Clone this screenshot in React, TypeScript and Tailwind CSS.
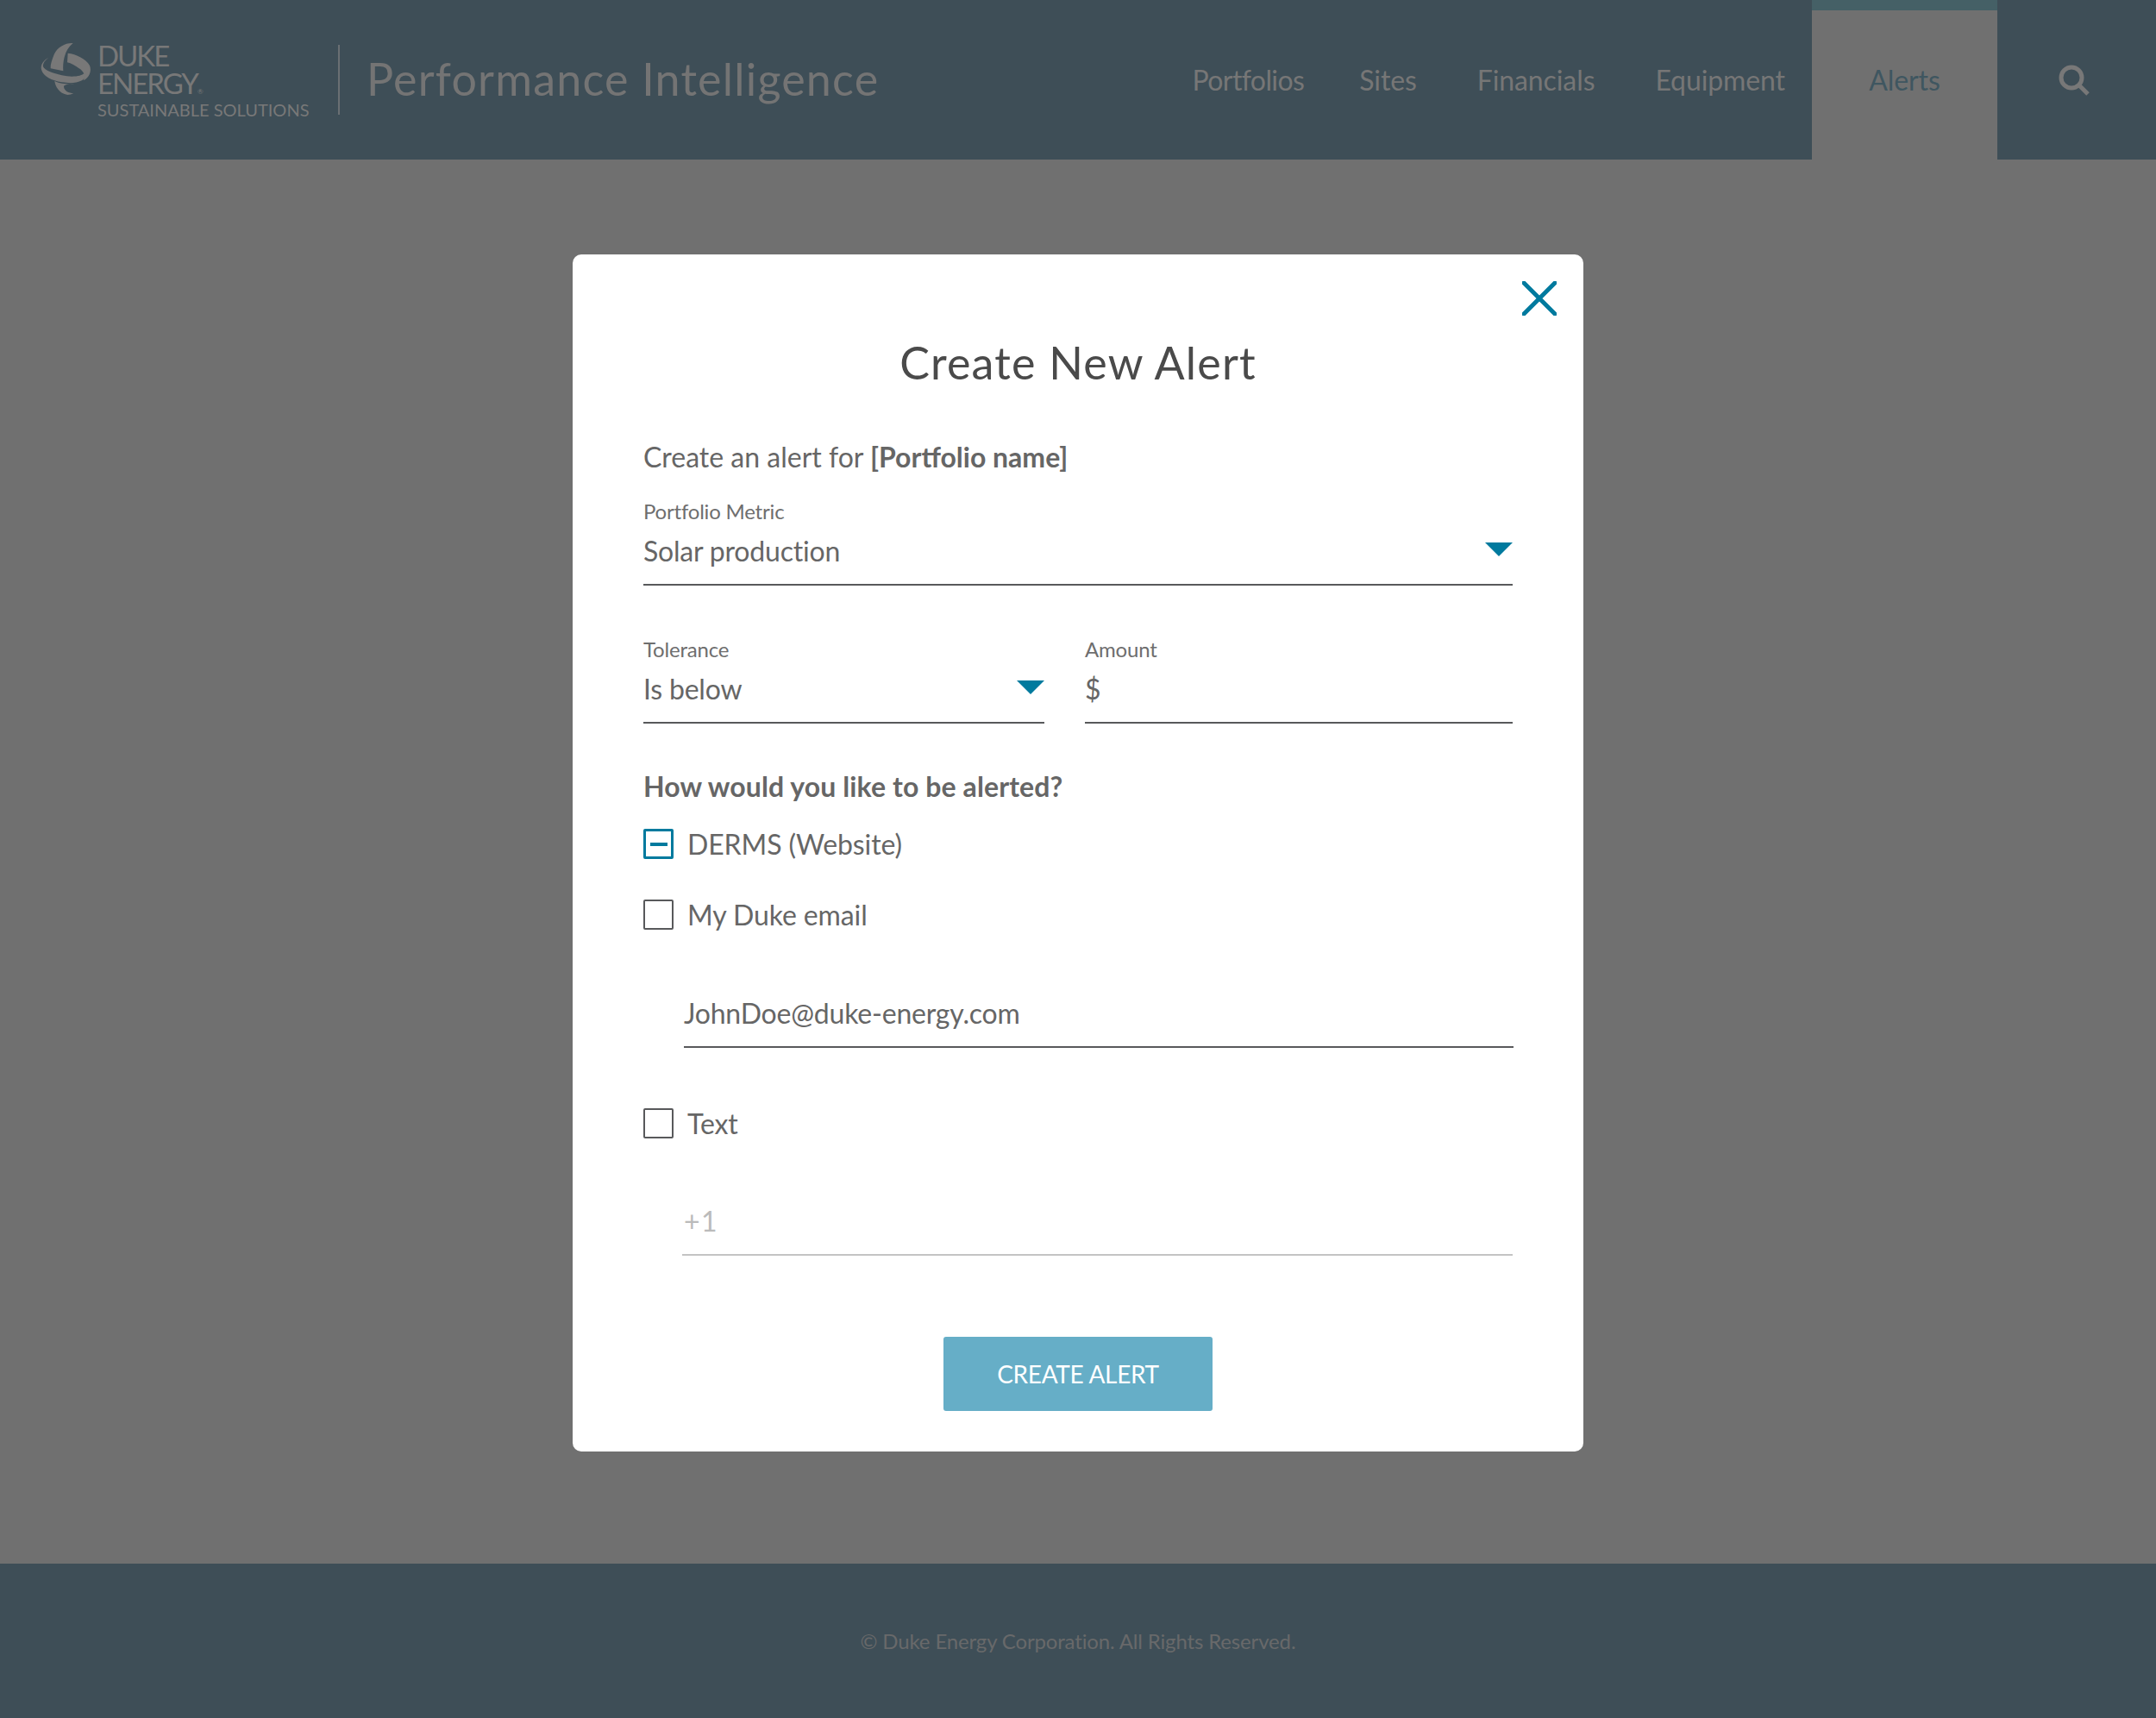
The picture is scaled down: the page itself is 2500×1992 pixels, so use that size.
const font = "font-['Lato',sans-serif]";

const navItems = [
  { label: 'Portfolios', className: 'tracking-[-0.6px]' },
  { label: 'Sites', className: 'ml-[64px]' },
  { label: 'Financials', className: 'ml-[70px]' },
  { label: 'Equipment', className: 'ml-[70px]' },
];

const LogoMark = () => (
  <svg viewBox="0 0 225 225" className="w-[75px] h-[75px] shrink-0" fill="#787878">
    <path d="M134 30C110 28 80 42 68 70c-8 20-13 35-12 48l44 9c-2-27 2-72 34-97z" />
    <path d="M116 65c29 3 64 20 76 43 8 20-2 42-22 52 8-15 2-32-15-42-13-10-27-18-41-21z" />
    <path d="M50 80C30 90 20 105 24 122c6 23 36 38 71 44 25 4 50 4 70-6 13-8 13-18 7-25-7 10-42 15-77 7-30-7-60-17-65-30-2-12 8-24 20-32z" />
    <path d="M70 162c2 18 15 43 45 48 7 0 15-2 21-6-18 0-32-8-34-22 0-6 10-10 38-10-22 2-50 0-70-10z" />
  </svg>
);

const Caret = () => (
  <span className="w-0 h-0 border-l-[16px] border-r-[16px] border-t-[16px] border-l-transparent border-r-transparent border-t-[#007a9e] mt-[-4px]" />
);

const Field = ({ label, value, caret, className }: { label: string; value: string; caret?: boolean; className: string }) => (
  <div className={className}>
    <div className="h-[30px] text-[24px] leading-[30px] tracking-[-0.2px] text-[#6e6e6e]">{label}</div>
    <div className="mt-[11px] h-[40px] flex items-center justify-between text-[32px] leading-[40px] tracking-[-0.2px] text-[#666666]">
      <span>{value}</span>
      {caret && <Caret />}
    </div>
    <div className="mt-[18px] h-[2px] bg-[#58595b]" />
  </div>
);

const Check = ({ label, on }: { label: string; on?: boolean }) => (
  <div className="flex items-center h-[35px] gap-[16px] text-[32px] tracking-[-0.1px] text-[#666666]">
    <span className={`w-[35px] h-[35px] rounded-[2px] flex items-center justify-center ${on ? 'border-[3px] border-[#007a9e]' : 'border-[2px] border-[#58595b]'}`}>
      {on && <span className="w-[20px] h-[4px] bg-[#007a9e]" />}
    </span>
    <span>{label}</span>
  </div>
);

export default function App() {
  return (
    <div className={`${font} w-[2500px] h-[1992px] flex flex-col bg-[#707070]`}>
      <header className="h-[185px] flex bg-[#3e4e57] shrink-0">
        <div className="flex flex-1 pl-[40px]">
          <div className="pt-[40px]"><LogoMark /></div>
          <div className="ml-[-2px] pt-[48px] w-[260px] text-[#787878]">
            <div className="text-[33px] leading-[32px] tracking-[-2px]">
              DUKE
              <br />
              ENERGY<span className="text-[8px] leading-none tracking-normal">®</span>
            </div>
            <div className="text-[20px] leading-[24px] mt-[3px] whitespace-nowrap">SUSTAINABLE SOLUTIONS</div>
          </div>
          <div className="mt-[52px] w-[2px] h-[81px] bg-[#6a6f73] ml-[19px]" />
          <div className="ml-[31px] mt-[59px] text-[52px] leading-[64px] tracking-[1.2px] text-[#747474] whitespace-nowrap">Performance Intelligence</div>
        </div>
        <nav className="flex items-center pr-[31px] text-[32px] tracking-[-0.1px] text-[#767676]">
          {navItems.map((item) => (
            <span key={item.label} className={item.className}>{item.label}</span>
          ))}
        </nav>
        <div className="w-[215px] bg-[#707070] border-t-[12px] border-[#456066] flex items-center justify-center text-[32px] tracking-[-0.1px] text-[#3f5660] pb-[12px]">
          Alerts
        </div>
        <div className="w-[184px] flex items-center justify-center pr-[6px]">
          <svg viewBox="0 0 36 36" className="w-[36px] h-[36px]" fill="none" stroke="#787878" strokeWidth="5">
            <circle cx="15" cy="15" r="12" />
            <path d="M24 24l10 10" />
          </svg>
        </div>
      </header>

      <main className="flex-1 flex justify-center pt-[110px]">
        <div className="relative w-[1172px] h-[1388px] bg-white rounded-[10px] px-[82px] pt-[95px]">
          <svg viewBox="0 0 40 40" className="absolute right-[31px] top-[31px] w-[40px] h-[40px]" fill="none" stroke="#007a9e" strokeWidth="5" strokeLinecap="round">
            <path d="M2 2l36 36M38 2L2 38" />
          </svg>
          <h1 className="h-[60px] text-center text-[52px] leading-[60px] tracking-[1.2px] text-[#4a4a4a]">Create New Alert</h1>
          <p className="mt-[60px] h-[40px] text-[32px] leading-[40px] tracking-[0px] text-[#666666]">
            Create an alert for <strong className="font-bold">[Portfolio name]</strong>
          </p>
          <Field className="mt-[28px]" label="Portfolio Metric" value="Solar production" caret />
          <div className="mt-[59px] flex gap-[47px]">
            <Field className="w-[465px]" label="Tolerance" value="Is below" caret />
            <Field className="flex-1" label="Amount" value="$" />
          </div>
          <h2 className="mt-[53px] h-[40px] text-[32px] leading-[40px] font-bold tracking-[0.1px] text-[#666666]">How would you like to be alerted?</h2>
          <div className="mt-[29px]"><Check label="DERMS (Website)" on /></div>
          <div className="mt-[47px]"><Check label="My Duke email" /></div>
          <div className="mt-[77px] ml-[47px] mr-[-1px]">
            <div className="h-[40px] text-[32px] leading-[40px] tracking-[-0.2px] text-[#666666]">JohnDoe@duke-energy.com</div>
            <div className="mt-[18px] h-[2px] bg-[#58595b]" />
          </div>
          <div className="mt-[70px]"><Check label="Text" /></div>
          <div className="mt-[76px] ml-[45px]">
            <div className="h-[40px] pl-[2px] text-[32px] leading-[40px] tracking-[1.5px] text-[#bbbbbb]">+1</div>
            <div className="mt-[18px] h-[2px] bg-[#c4c4c4]" />
          </div>
          <div className="mt-[94px] flex justify-center">
            <button className="w-[312px] h-[86px] rounded-[3px] bg-[#66aec7] text-white text-[28px] tracking-[-0.3px]">CREATE ALERT</button>
          </div>
        </div>
      </main>

      <footer className="h-[179px] shrink-0 bg-[#3e4e57] flex items-center justify-center text-[24px] tracking-[-0.15px] text-[#68696a]">
        © Duke Energy Corporation. All Rights Reserved.
      </footer>
    </div>
  );
}
